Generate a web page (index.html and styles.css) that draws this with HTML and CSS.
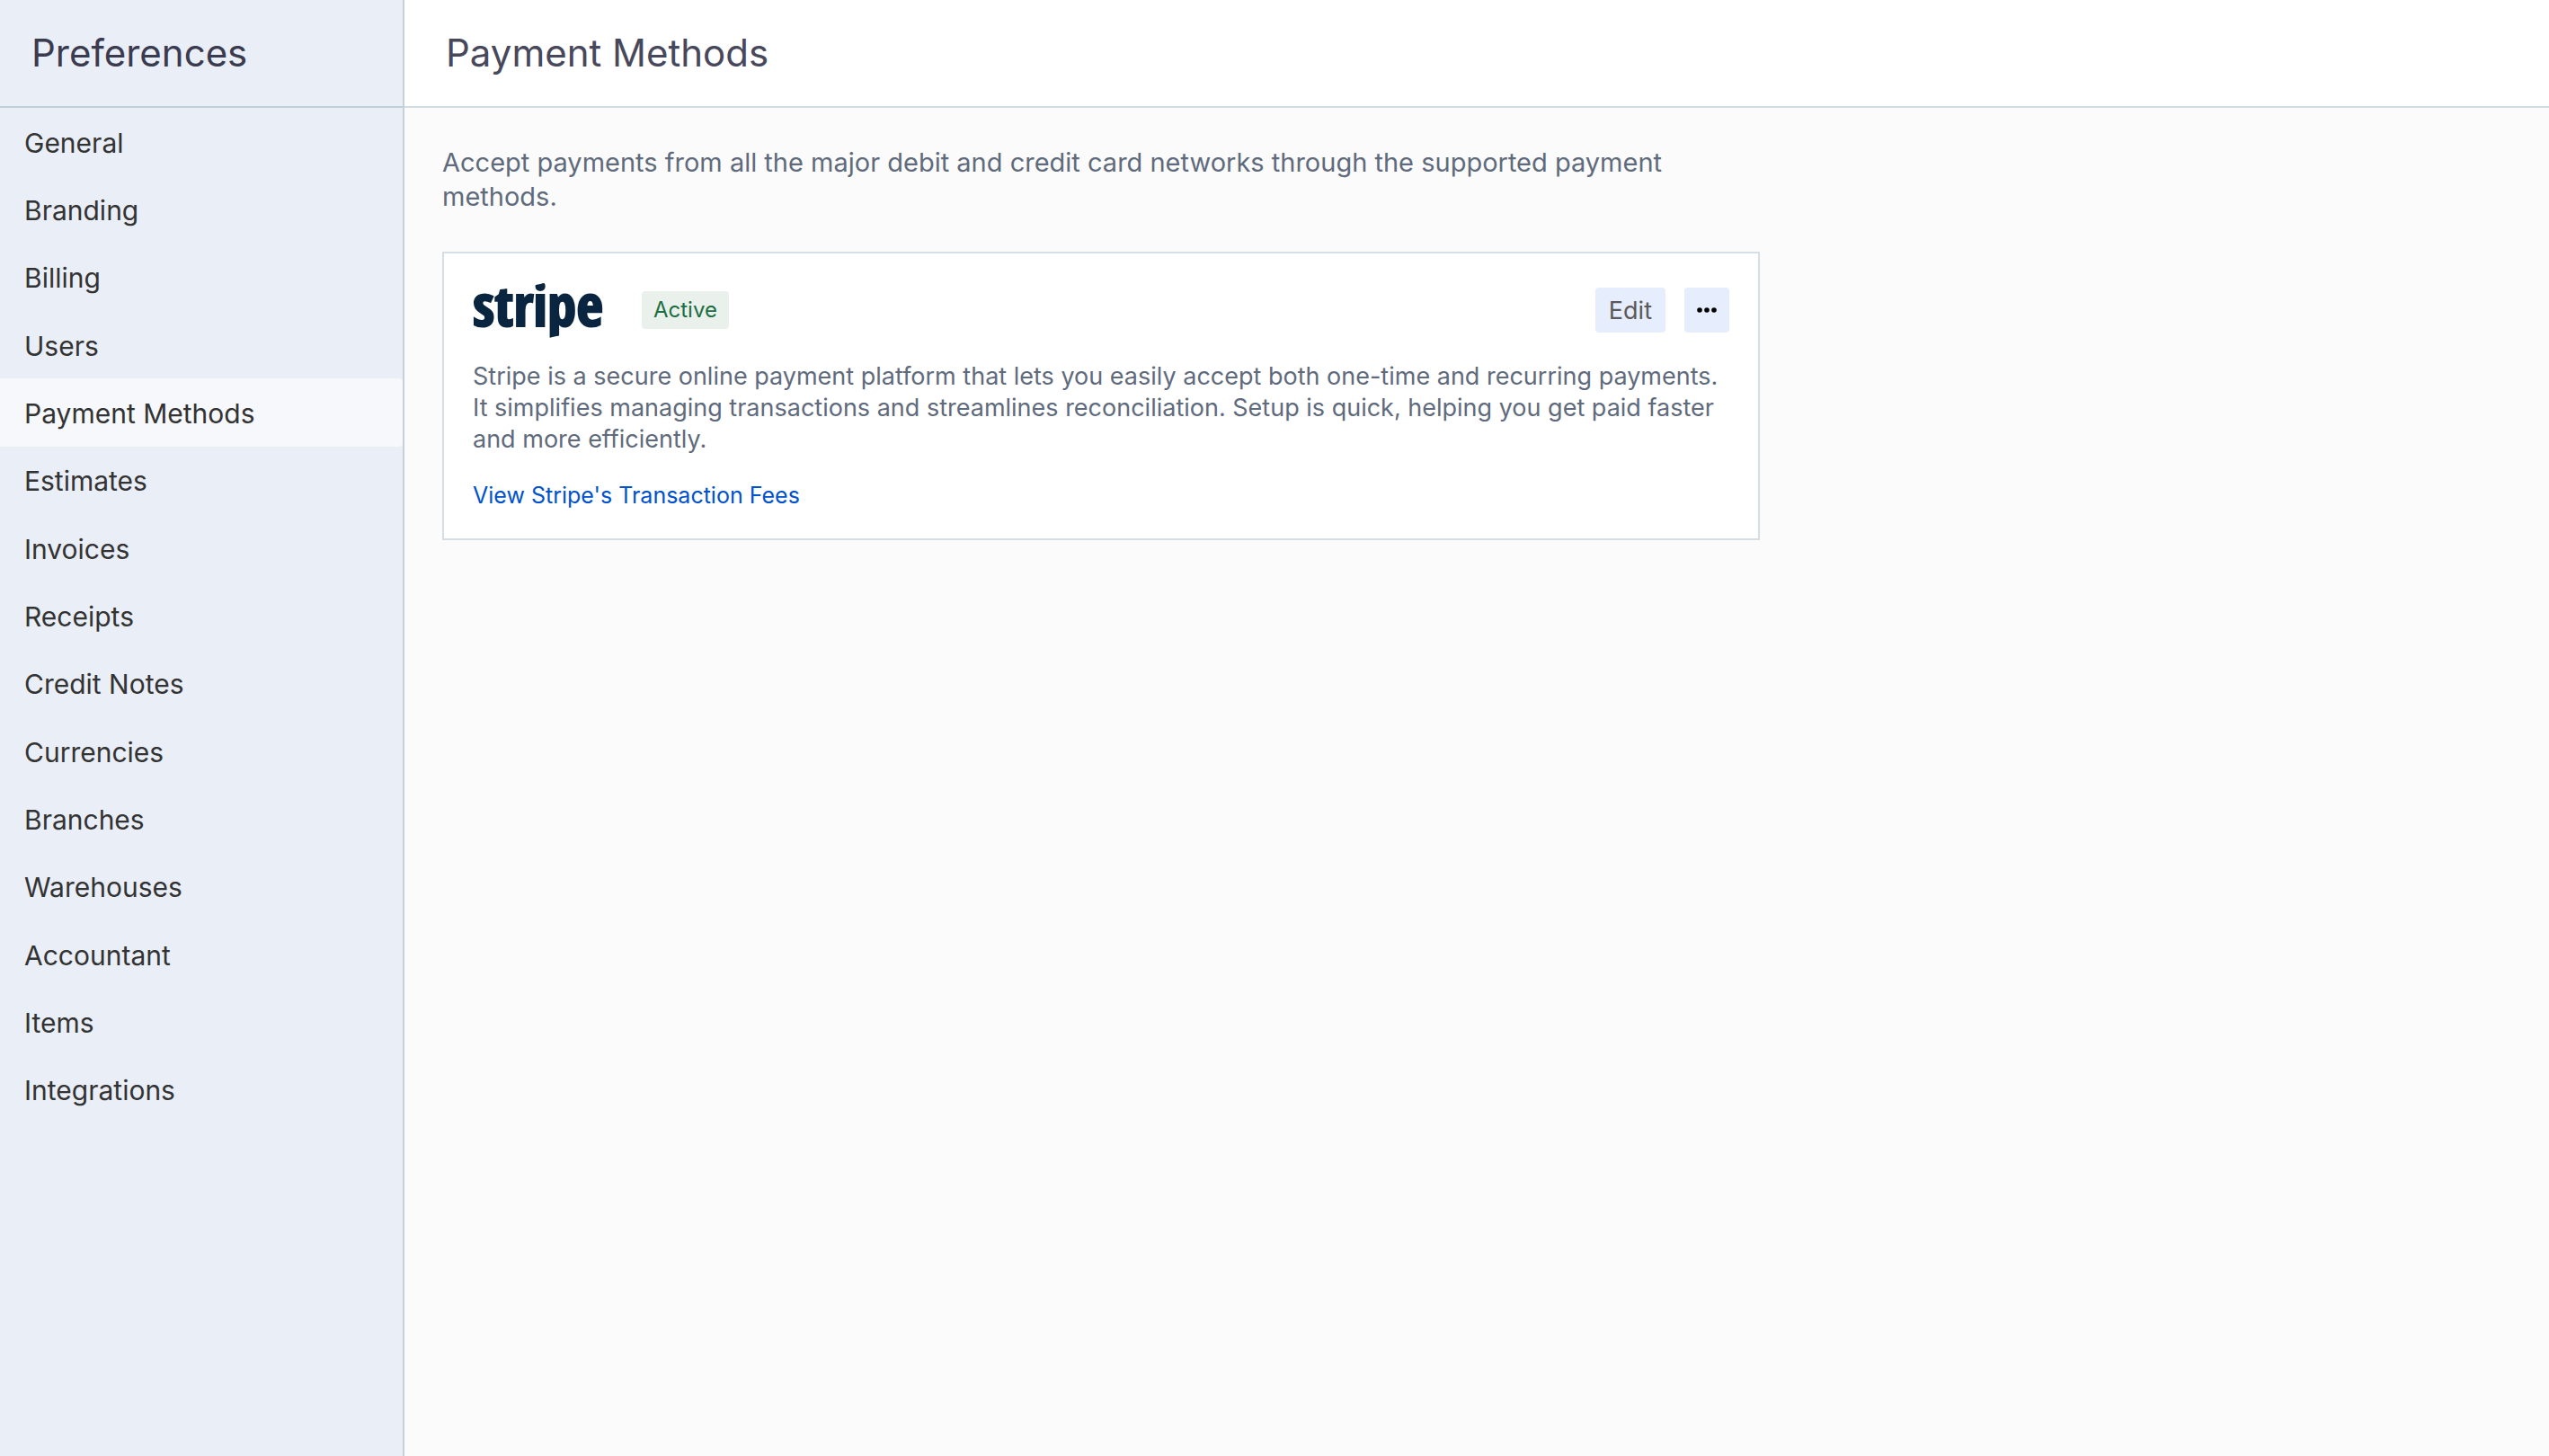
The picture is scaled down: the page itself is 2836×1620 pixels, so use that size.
FILE: index.html
```html
<!DOCTYPE html>
<html lang="en">
<head>
<meta charset="utf-8">
<meta name="viewport" content="width=device-width, initial-scale=1">
<title>Preferences - Payment Methods</title>
<link rel="stylesheet" href="styles.css">
</head>
<body>
<div class="layout">
  <aside class="sidebar">
    <header class="bar sidebar-bar"><h2 class="bar-title">Preferences</h2></header>
    <nav class="menu" aria-label="Preferences">
      <a class="menu-item" href="#general">General</a>
      <a class="menu-item" href="#branding">Branding</a>
      <a class="menu-item" href="#billing">Billing</a>
      <a class="menu-item" href="#users">Users</a>
      <a class="menu-item active" href="#payment-methods" aria-current="page">Payment Methods</a>
      <a class="menu-item" href="#estimates">Estimates</a>
      <a class="menu-item" href="#invoices">Invoices</a>
      <a class="menu-item" href="#receipts">Receipts</a>
      <a class="menu-item" href="#credit-notes">Credit Notes</a>
      <a class="menu-item" href="#currencies">Currencies</a>
      <a class="menu-item" href="#branches">Branches</a>
      <a class="menu-item" href="#warehouses">Warehouses</a>
      <a class="menu-item" href="#accountant">Accountant</a>
      <a class="menu-item" href="#items">Items</a>
      <a class="menu-item" href="#integrations">Integrations</a>
    </nav>
  </aside>
  <main class="page">
    <header class="bar page-bar"><h1 class="bar-title">Payment Methods</h1></header>
    <div class="content">
      <p class="intro">Accept payments from all the major debit and credit card networks through the supported payment methods.</p>
      <section class="card">
        <div class="card-head">
          <svg class="logo" viewBox="0 0 148 62" role="img" aria-label="stripe">
            <clipPath id="logo-edge"><polygon points="-4,12 66,4 84,0 152,0 152,59 98,59 84,62 -4,62"/></clipPath>
            <g clip-path="url(#logo-edge)"><text class="logo-text" x="0" y="49">stripe</text></g>
          </svg>
          <span class="tag">Active</span>
          <div class="actions">
            <button class="button" type="button">Edit</button>
            <button class="button button-icon" type="button" aria-label="More">
              <svg class="dots" viewBox="0 0 22 6" aria-hidden="true"><circle cx="3" cy="3" r="2.8"/><circle cx="11" cy="3" r="2.8"/><circle cx="19" cy="3" r="2.8"/></svg>
            </button>
          </div>
        </div>
        <p class="card-text">Stripe is a secure online payment platform that lets you easily accept both one-time and recurring payments. It simplifies managing transactions and streamlines reconciliation. Setup is quick, helping you get paid faster and more efficiently.</p>
        <a class="card-link" href="#fees">View Stripe's Transaction Fees</a>
      </section>
    </div>
  </main>
</div>
</body>
</html>
```
FILE: styles.css
```css
* { box-sizing: border-box; }

body {
  margin: 0;
  background: #fbfbfb;
  color: #333;
  font-family: Inter, "Liberation Sans", sans-serif;
  font-size: 30px;
}

h1, h2, p { margin: 0; }

.layout {
  display: grid;
  grid-template-columns: 450px minmax(0, 1fr);
  min-height: 100vh;
}

.sidebar {
  background: #e9eef7;
  border-right: 2px solid #c6d0da;
}

.bar {
  display: flex;
  align-items: center;
  height: 120px;
  border-bottom: 2px solid #d2dde2;
}

.sidebar-bar {
  padding: 0 35px;
  border-color: #c0cfd8;
  color: #3b3b4f;
}

.page-bar {
  padding: 0 46px;
  background: #fff;
  color: #48485c;
}

.bar-title {
  font-size: 42px;
  font-weight: 400;
  line-height: 48px;
}

.menu {
  display: grid;
  grid-auto-rows: 1fr;
  min-height: 1130px;
}

.menu-item {
  display: flex;
  align-items: center;
  padding: 2px 27px 0;
  border-radius: 0 4px 4px 0;
  color: #333;
  text-decoration: none;
}

.menu-item.active { background: #f7f8fc; }

.content {
  max-width: 1550px;
  padding: 42px;
}

.intro {
  margin-bottom: 42px;
  color: #5f6b7c;
  font-size: 29px;
  line-height: 38px;
}

.card {
  padding: 32px;
  background: #fff;
  border: 2px solid #d5dee5;
}

.card-head {
  display: flex;
  align-items: center;
  margin-bottom: 25px;
}

.logo {
  width: 148px;
  height: 62px;
  margin-right: 40px;
  overflow: visible;
}

.logo-text {
  fill: #0a2540;
  stroke: #0a2540;
  stroke-width: 2px;
  font-family: "Open Sans Condensed", "Liberation Sans", sans-serif;
  font-size: 65px;
  font-weight: 800;
}

.tag {
  padding: 4px 13px;
  border-radius: 4px;
  background: #eaf1ed;
  color: #1c6e42;
  font-size: 24px;
  line-height: 34px;
}

.actions {
  display: flex;
  gap: 21px;
  margin-left: auto;
}

.button {
  display: flex;
  align-items: center;
  justify-content: center;
  height: 50px;
  padding: 0 15px;
  border: 0;
  border-radius: 4px;
  background: #e6edfc;
  color: #5a5a5a;
  font: inherit;
  font-size: 27px;
}

.button-icon { padding: 0 14px; }

.dots {
  width: 22px;
  height: 6px;
  fill: #000;
}

.card-text {
  margin-bottom: 29px;
  color: #5f6b7c;
  font-size: 27px;
  line-height: 35px;
}

.card-link {
  display: block;
  width: fit-content;
  color: #0052cc;
  font-size: 25px;
  line-height: 32px;
  text-decoration: none;
}
```
